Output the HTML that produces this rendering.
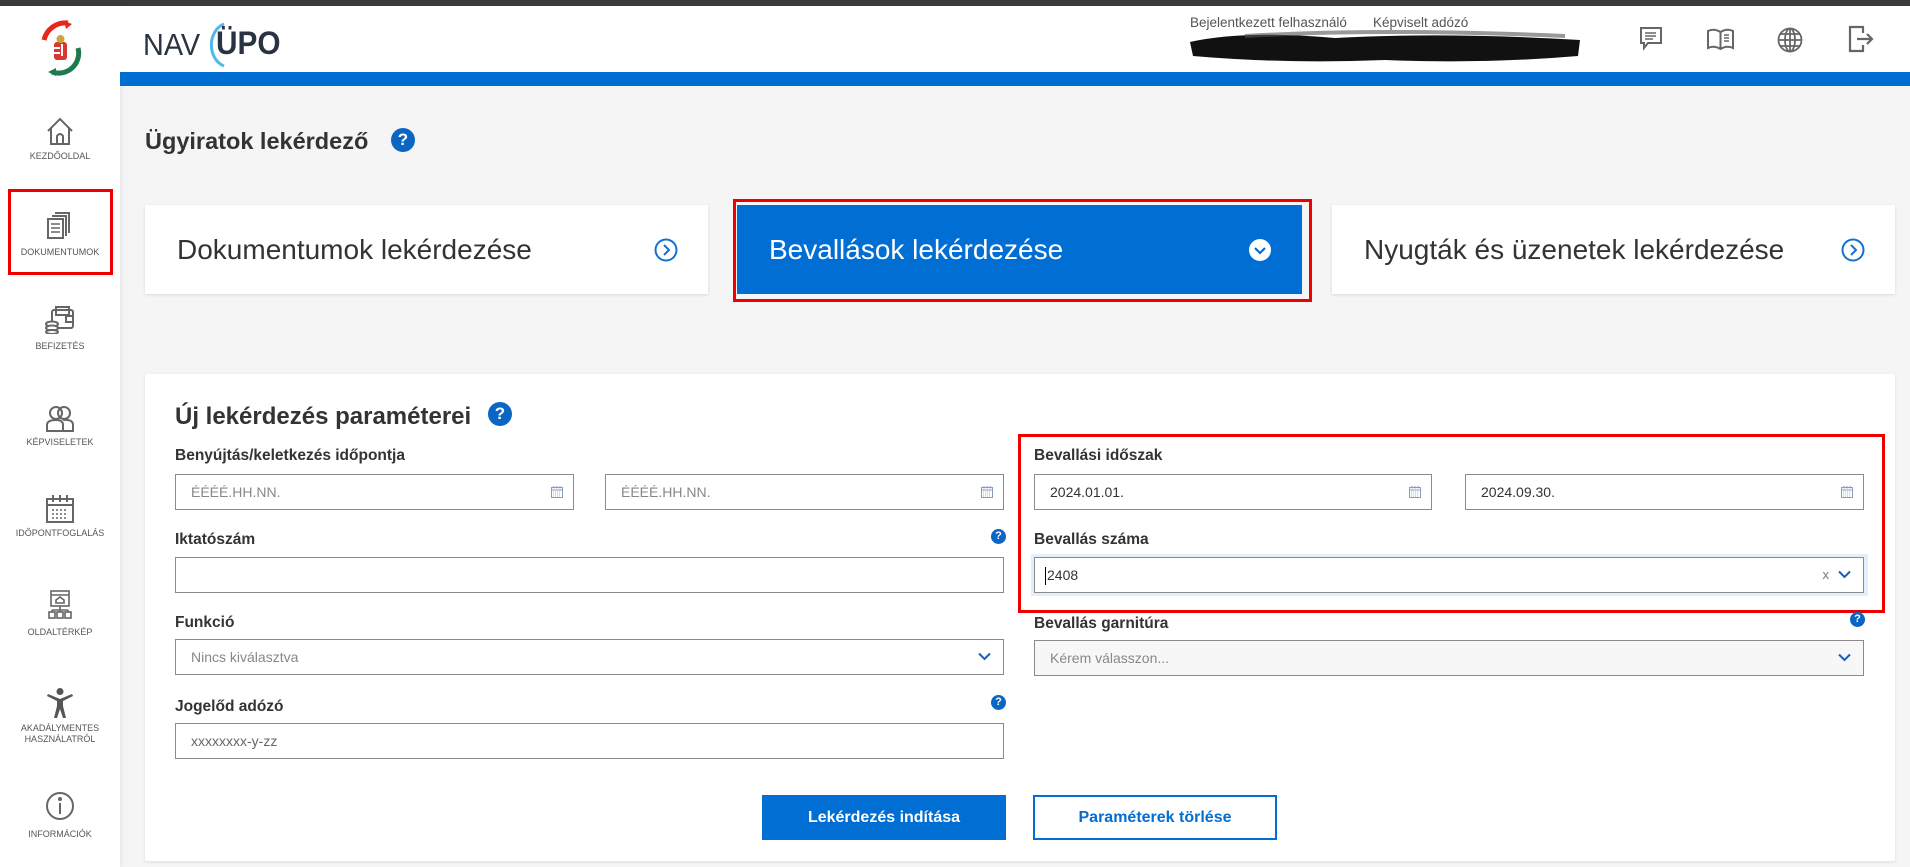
<!DOCTYPE html>
<html><head><meta charset="utf-8">
<style>
*{box-sizing:border-box;margin:0;padding:0}
body{width:1910px;height:867px;overflow:hidden;background:#f5f5f5;font-family:"Liberation Sans",Arial,sans-serif;position:relative;color:#333}
.a{position:absolute}
.topbar{left:0;top:0;width:1910px;height:6px;background:#3a3a3a}
.side{left:0;top:6px;width:120px;height:861px;background:#fff;box-shadow:2px 0 4px rgba(0,0,0,.06)}
.header{left:120px;top:6px;width:1790px;height:66px;background:#fff}
.bluebar{left:120px;top:72px;width:1790px;height:14px;background:#006ed0}
.sl{width:120px;text-align:center;font-size:9px;color:#555;left:0;line-height:11px}
.ic{left:45px;width:30px;height:30px}
.card{background:#fff;box-shadow:0 1px 3px rgba(0,0,0,.12);height:89px;top:205px}
.card span{position:absolute;left:32px;top:29px;font-size:28px;color:#333}
.chev{position:absolute;right:30px;top:33px;width:24px;height:24px}
.lbl{font-size:15.5px;font-weight:bold;color:#333}
.inp{background:#fff;border:1px solid #8a8a8a;height:36px;font-size:14px;line-height:34px;padding-left:15px;color:#333}
.ph{color:#888}
.cal{position:absolute;right:10px;top:10px}
.q{width:16px;height:16px;border-radius:50%;background:#0a66c2;color:#fff;font-size:12px;font-weight:bold;text-align:center;line-height:16px}
.dd{position:absolute;right:12px;top:12px}
</style></head><body>
<div class="a topbar"></div>
<div class="a side"></div>
<div class="a header"></div>
<div class="a bluebar"></div>

<svg class="a" style="left:38px;top:20px" width="46" height="60" viewBox="0 0 46 60">
<path d="M30 3 A22 22 0 0 0 6 20" fill="none" stroke="#e8261c" stroke-width="5"/>
<path d="M26 1 L34 4 L28 9Z" fill="#e8261c"/>
<path d="M40 28 A20 20 0 0 1 14 52" fill="none" stroke="#1e7a4c" stroke-width="5"/>
<path d="M18 48 L10 52 L18 56Z" fill="#1e7a4c"/>
<rect x="16" y="22" width="13" height="18" rx="3" fill="#d6392f"/>
<rect x="16" y="27" width="6" height="2" fill="#fff"/><rect x="16" y="32" width="6" height="2" fill="#fff"/>
<rect x="23" y="24" width="2" height="12" fill="#fff"/>
<circle cx="22.5" cy="19" r="4" fill="#c9a640"/>
</svg>

<div class="a" style="left:143px;top:27px;font-size:31px;color:#2a3344;letter-spacing:0px;font-weight:300;transform:scaleX(0.93);transform-origin:left">NAV</div>
<svg class="a" style="left:204px;top:22px" width="30" height="46" viewBox="0 0 30 46"><path d="M20 2 A18 22 0 0 0 20 44" fill="none" stroke="#4fb8ea" stroke-width="3"/></svg>
<div class="a" style="left:216px;top:25px;font-size:32px;color:#2a3344;font-weight:bold;transform:scaleX(0.93);transform-origin:left">ÜPO</div>

<div class="a" style="left:1190px;top:15px;font-size:13.5px;color:#555">Bejelentkezett felhasználó</div>
<div class="a" style="left:1373px;top:15px;font-size:13.5px;color:#555">Képviselt adózó</div>
<svg class="a" style="left:1185px;top:28px" width="400" height="38"><path d="M5 14 Q60 2 150 10 Q260 4 395 12 L393 28 Q300 36 200 32 Q100 36 8 28Z" fill="#111"/><path d="M60 8 Q200 0 380 8" stroke="#555" stroke-width="4" fill="none" opacity=".6"/></svg>

<svg class="a" style="left:1640px;top:27px" width="22" height="24" viewBox="0 0 22 24" fill="none" stroke="#666" stroke-width="2"><path d="M1 1H21V16H8L4 21V16H1Z"/><path d="M5 6H16M5 9H16M5 12H13" stroke-width="1.5"/></svg>
<svg class="a" style="left:1707px;top:28px" width="27" height="22" viewBox="0 0 27 22" fill="none" stroke="#666" stroke-width="2"><path d="M13.5 4Q7 0 1 3V20Q7 17 13.5 21Q20 17 26 20V3Q20 0 13.5 4V21"/><path d="M17 7H22M17 10H22M17 13H22" stroke-width="1.5"/></svg>
<svg class="a" style="left:1777px;top:27px" width="26" height="26" viewBox="0 0 26 26" fill="none" stroke="#666" stroke-width="1.8"><circle cx="13" cy="13" r="11.5"/><ellipse cx="13" cy="13" rx="5" ry="11.5"/><path d="M13 1.5V24.5M1.5 13H24.5M3.5 7H22.5M3.5 19H22.5"/></svg>
<svg class="a" style="left:1848px;top:25px" width="26" height="28" viewBox="0 0 26 28" fill="none" stroke="#666" stroke-width="2.2"><path d="M15 8V2H2V26H15V20"/><path d="M9 14H24M19 9L24 14L19 19"/></svg>

<svg class="a ic" style="top:116px" viewBox="0 0 30 30" fill="none" stroke="#666" stroke-width="2"><path d="M3 15L15 3L27 15M6 12V28H24V12M12 28V20Q15 16 18 20V28"/></svg>
<div class="a sl" style="top:151px">KEZDŐOLDAL</div>
<div class="a" style="left:8px;top:189px;width:105px;height:86px;border:3px solid #e00"></div>
<svg class="a ic" style="top:210px" viewBox="0 0 30 30" fill="none" stroke="#666" stroke-width="2"><path d="M10 3H24V23M7 6H21V26"/><rect x="3" y="9" width="15" height="19"/><path d="M6 14H15M6 18H15M6 22H15" stroke-width="1.5"/></svg>
<div class="a sl" style="top:247px">DOKUMENTUMOK</div>
<svg class="a ic" style="top:304px" viewBox="0 0 30 30" fill="none" stroke="#666" stroke-width="2"><rect x="7" y="6" width="21" height="18" rx="2"/><rect x="11" y="3" width="13" height="8"/><rect x="21" y="12" width="7" height="6"/><ellipse cx="7" cy="20" rx="6" ry="2.5" fill="#fff"/><ellipse cx="7" cy="24" rx="6" ry="2.5" fill="#fff"/><ellipse cx="7" cy="28" rx="6" ry="2" fill="#fff"/></svg>
<div class="a sl" style="top:341px">BEFIZETÉS</div>
<svg class="a ic" style="top:404px" viewBox="0 0 30 30" fill="none" stroke="#666" stroke-width="2"><circle cx="11" cy="9" r="6"/><circle cx="19" cy="9" r="6"/><path d="M2 27V21Q2 16 11 16Q18 16 18 21V27ZM18 16Q28 15 28 21V27H18"/></svg>
<div class="a sl" style="top:437px">KÉPVISELETEK</div>
<svg class="a ic" style="top:494px" viewBox="0 0 30 30" fill="none" stroke="#666" stroke-width="2"><rect x="2" y="5" width="26" height="23"/><path d="M2 11H28M8 1V8M15 1V8M22 1V8"/><path d="M7 16H23M7 20H23M7 24H23" stroke-dasharray="2 2" stroke-width="1.5"/></svg>
<div class="a sl" style="top:528px">IDŐPONTFOGLALÁS</div>
<svg class="a ic" style="top:590px" viewBox="0 0 30 30" fill="none" stroke="#666" stroke-width="1.6"><rect x="6" y="1" width="18" height="15"/><path d="M6 5H24M11 13V10L15 7L19 10V13ZM15 16V20M7 20H23M7 20V22M15 20V22M23 20V22"/><rect x="4" y="22" width="6" height="6"/><rect x="12" y="22" width="6" height="6"/><rect x="20" y="22" width="6" height="6"/></svg>
<div class="a sl" style="top:627px">OLDALTÉRKÉP</div>
<svg class="a ic" style="top:688px" viewBox="0 0 30 30" fill="#555"><circle cx="15" cy="3.5" r="3.5"/><path d="M3 6L15 11L27 6L28 8L18 13V18L21 30H18L15 21L12 30H9L12 18V13L2 8Z"/></svg>
<div class="a sl" style="top:723px">AKADÁLYMENTES<br>HASZNÁLATRÓL</div>
<svg class="a ic" style="top:791px" viewBox="0 0 30 30" fill="none" stroke="#666" stroke-width="2"><circle cx="15" cy="15" r="13"/><path d="M15 12V23"/><circle cx="15" cy="8" r="1" fill="#666"/></svg>
<div class="a sl" style="top:829px">INFORMÁCIÓK</div>

<div class="a" style="left:145px;top:128px;font-size:23.5px;font-weight:bold;color:#333">Ügyiratok lekérdező</div>
<div class="a q" style="left:391px;top:128px;width:24px;height:24px;line-height:24px;font-size:17px">?</div>

<div class="a card" style="left:145px;width:563px"><span>Dokumentumok lekérdezése</span>
<svg class="chev" viewBox="0 0 24 24" fill="none" stroke="#1570d0" stroke-width="2"><circle cx="12" cy="12" r="10.5"/><path d="M10 7L15 12L10 17"/></svg></div>
<div class="a" style="left:733px;top:199px;width:579px;height:103px;border:3px solid #e00"></div>
<div class="a card" style="left:737px;width:565px;background:#006ed3;box-shadow:none"><span style="color:#fff">Bevallások lekérdezése</span>
<svg class="chev" viewBox="0 0 24 24"><circle cx="12" cy="12" r="11" fill="#fff"/><path d="M7 10L12 15L17 10" fill="none" stroke="#006ed3" stroke-width="2.2"/></svg></div>
<div class="a card" style="left:1332px;width:563px"><span>Nyugták és üzenetek lekérdezése</span>
<svg class="chev" viewBox="0 0 24 24" fill="none" stroke="#1570d0" stroke-width="2"><circle cx="12" cy="12" r="10.5"/><path d="M10 7L15 12L10 17"/></svg></div>

<div class="a" style="left:145px;top:374px;width:1750px;height:487px;background:#fff;box-shadow:0 1px 3px rgba(0,0,0,.1)"></div>
<div class="a" style="left:175px;top:403px;font-size:24px;font-weight:bold;color:#333">Új lekérdezés paraméterei</div>
<div class="a q" style="left:488px;top:402px;width:24px;height:24px;line-height:24px;font-size:17px">?</div>

<div class="a" style="left:1018px;top:434px;width:867px;height:179px;border:3px solid #e00"></div>

<svg width="0" height="0" style="position:absolute"><defs><g id="calg"><rect x="0.5" y="2.5" width="11" height="10" fill="none" stroke="#8a9bc2"/><path d="M0.5 5H11.5M3 1V3.5M6 1V3.5M9 1V3.5" stroke="#8a9bc2"/><path d="M2 7H10M2 9H10M2 11H10" stroke="#a8b4d0" stroke-dasharray="1 1"/></g></defs></svg>

<div class="a lbl" style="left:175px;top:447px">Benyújtás/keletkezés időpontja</div>
<div class="a inp ph" style="left:175px;top:474px;width:399px">ÉÉÉÉ.HH.NN.<svg class="cal" width="12" height="14"><use href="#calg"/></svg></div>
<div class="a inp ph" style="left:605px;top:474px;width:399px">ÉÉÉÉ.HH.NN.<svg class="cal" width="12" height="14"><use href="#calg"/></svg></div>

<div class="a lbl" style="left:1034px;top:447px">Bevallási időszak</div>
<div class="a inp" style="left:1034px;top:474px;width:398px">2024.01.01.<svg class="cal" width="12" height="14"><use href="#calg"/></svg></div>
<div class="a inp" style="left:1465px;top:474px;width:399px">2024.09.30.<svg class="cal" width="12" height="14"><use href="#calg"/></svg></div>

<div class="a lbl" style="left:175px;top:531px">Iktatószám</div>
<div class="a q" style="left:991px;top:529px;width:15px;height:15px;line-height:15px;font-size:11px">?</div>
<div class="a inp" style="left:175px;top:557px;width:829px"></div>

<div class="a lbl" style="left:1034px;top:531px">Bevallás száma</div>
<div class="a" style="left:1031px;top:554px;width:837px;height:42px;background:#e3effb"></div>
<div class="a inp" style="left:1034px;top:557px;width:830px;padding-left:10px"><span style="border-left:1px solid #000;margin-right:1px;display:inline-block;height:18px;vertical-align:middle"></span>2408
<span style="position:absolute;right:34px;top:0;color:#777;font-size:13px">x</span>
<svg class="dd" width="13" height="9" viewBox="0 0 13 9"><path d="M1 1.5L6.5 7L12 1.5" fill="none" stroke="#1a5fb4" stroke-width="2"/></svg></div>

<div class="a lbl" style="left:175px;top:614px">Funkció</div>
<div class="a inp ph" style="left:175px;top:639px;width:829px">Nincs kiválasztva<svg class="dd" width="13" height="9" viewBox="0 0 13 9"><path d="M1 1.5L6.5 7L12 1.5" fill="none" stroke="#1a5fb4" stroke-width="2"/></svg></div>

<div class="a lbl" style="left:1034px;top:615px">Bevallás garnitúra</div>
<div class="a q" style="left:1850px;top:612px;width:15px;height:15px;line-height:15px;font-size:11px">?</div>
<div class="a inp ph" style="left:1034px;top:640px;width:830px;background:#f7f7f7">Kérem válasszon...<svg class="dd" width="13" height="9" viewBox="0 0 13 9"><path d="M1 1.5L6.5 7L12 1.5" fill="none" stroke="#1a5fb4" stroke-width="2"/></svg></div>

<div class="a lbl" style="left:175px;top:698px">Jogelőd adózó</div>
<div class="a q" style="left:991px;top:695px;width:15px;height:15px;line-height:15px;font-size:11px">?</div>
<div class="a inp ph" style="left:175px;top:723px;width:829px;color:#666">xxxxxxxx-y-zz</div>

<div class="a" style="left:762px;top:795px;width:244px;height:45px;background:#006ed3;color:#fff;font-size:16px;font-weight:bold;text-align:center;line-height:45px">Lekérdezés indítása</div>
<div class="a" style="left:1033px;top:795px;width:244px;height:45px;border:2px solid #006ed3;background:#fff;color:#006ed3;font-size:16px;font-weight:bold;text-align:center;line-height:41px">Paraméterek törlése</div>
</body></html>
